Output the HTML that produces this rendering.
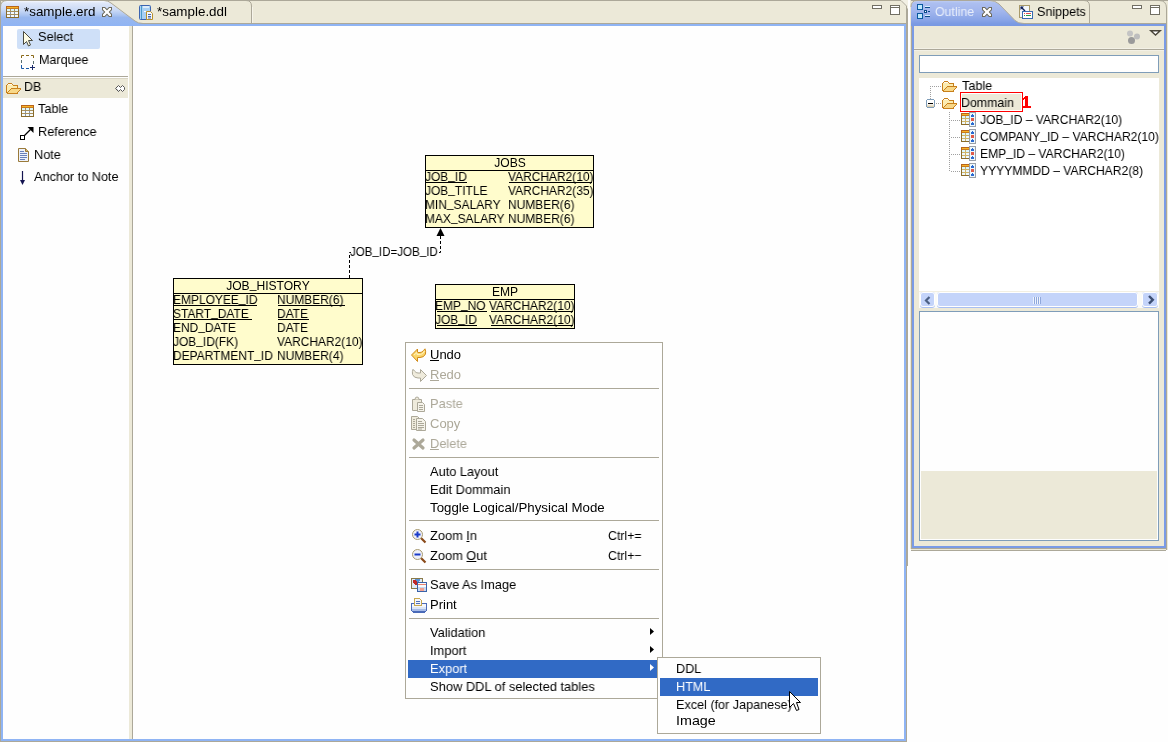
<!DOCTYPE html>
<html><head><meta charset="utf-8">
<style>
*{box-sizing:border-box;margin:0;padding:0}
html,body{width:1168px;height:742px;overflow:hidden;background:#fefefe}
body{position:relative;font-family:"Liberation Sans",sans-serif;font-size:13px;color:#000}
.a{position:absolute}
.t{position:absolute;white-space:pre;line-height:14px;transform-origin:0 0;will-change:transform}
.us{font-style:normal;position:relative;top:-2px}
svg{position:absolute;overflow:visible}
u{text-decoration:none;border-bottom:1px solid currentColor;display:inline-block;line-height:11px}
</style></head><body>
<div class="a" style="left:0px;top:0px;width:908px;height:742px;background:#aca899;"></div>
<div class="a" style="left:907px;top:566px;width:1px;height:176px;background:#fefefe;"></div>
<div class="a" style="left:1px;top:1px;width:905px;height:22px;background:#ece9d8;"></div>
<div class="a" style="left:1px;top:24px;width:905px;height:717px;background:#8fb4f4;"></div>
<div class="a" style="left:3px;top:26px;width:901px;height:713px;background:#fefefe;"></div>
<div class="a" style="left:140px;top:23px;width:766px;height:1px;background:#aca899;"></div>
<div class="a" style="left:129px;top:26px;width:3px;height:713px;background:#ece9d8;"></div>
<div class="a" style="left:132px;top:26px;width:1px;height:713px;background:#aca899;"></div>
<svg style="left:0px;top:0px" width="150" height="26" viewBox="0 0 150 26"><defs><linearGradient id="g1" x1="0" y1="0" x2="0" y2="1">
<stop offset="0" stop-color="#f5f7fd"/><stop offset="0.077" stop-color="#e0e8f9"/>
<stop offset="0.385" stop-color="#c8d8f5"/><stop offset="0.577" stop-color="#a9c3f0"/><stop offset="0.654" stop-color="#98b7ee"/>
<stop offset="1" stop-color="#8fb4f4"/></linearGradient></defs>
<path d="M1 26 L1 7 Q1 1 7 1 L104 1 Q108 1 111 3.5 L135 21 Q138 23.5 143 23.5 L150 23.5 L150 26 Z" fill="url(#g1)"/>
<path d="M0.5 26 L0.5 7 Q0.5 0.5 7 0.5 L104 0.5 Q108 0.5 111 3 L135 21 Q138 23.5 143 23.5 L150 23.5" fill="none" stroke="#aca899" stroke-width="1"/></svg>
<svg style="left:130px;top:0px" width="130" height="26" viewBox="0 0 130 26"><path d="M121.5 23 L121.5 6 Q121.5 0.5 116 0.5" fill="none" stroke="#aca899"/><path d="M122.5 23 V7" stroke="#f6f4ea"/></svg>
<svg style="left:6px;top:6px" width="13" height="12" shape-rendering="crispEdges"><rect x="0" y="0" width="13" height="1" fill="#b8641c"/><rect x="0" y="1" width="1" height="1" fill="#b8641c"/><rect x="1" y="1" width="11" height="1" fill="#f6b424"/><rect x="12" y="1" width="1" height="1" fill="#b8641c"/><rect x="0" y="2" width="1" height="1" fill="#b8641c"/><rect x="1" y="2" width="11" height="1" fill="#c87a20"/><rect x="12" y="2" width="1" height="1" fill="#b8641c"/><rect x="0" y="3" width="1" height="1" fill="#8a6c2c"/><rect x="1" y="3" width="3" height="1" fill="#dcf6fc"/><rect x="4" y="3" width="1" height="1" fill="#a89060"/><rect x="5" y="3" width="3" height="1" fill="#dcf6fc"/><rect x="8" y="3" width="1" height="1" fill="#a89060"/><rect x="9" y="3" width="3" height="1" fill="#dcf6fc"/><rect x="12" y="3" width="1" height="1" fill="#8a6c2c"/><rect x="0" y="4" width="1" height="1" fill="#8a6c2c"/><rect x="1" y="4" width="3" height="1" fill="#dcf6fc"/><rect x="4" y="4" width="1" height="1" fill="#a89060"/><rect x="5" y="4" width="3" height="1" fill="#dcf6fc"/><rect x="8" y="4" width="1" height="1" fill="#a89060"/><rect x="9" y="4" width="3" height="1" fill="#dcf6fc"/><rect x="12" y="4" width="1" height="1" fill="#8a6c2c"/><rect x="0" y="5" width="1" height="1" fill="#8a6c2c"/><rect x="1" y="5" width="11" height="1" fill="#a8905c"/><rect x="12" y="5" width="1" height="1" fill="#8a6c2c"/><rect x="0" y="6" width="1" height="1" fill="#8a6c2c"/><rect x="1" y="6" width="3" height="1" fill="#f6fbfc"/><rect x="4" y="6" width="1" height="1" fill="#8494a8"/><rect x="5" y="6" width="3" height="1" fill="#f6fbfc"/><rect x="8" y="6" width="1" height="1" fill="#8494a8"/><rect x="9" y="6" width="3" height="1" fill="#f6fbfc"/><rect x="12" y="6" width="1" height="1" fill="#8a6c2c"/><rect x="0" y="7" width="1" height="1" fill="#8a6c2c"/><rect x="1" y="7" width="3" height="1" fill="#f6fbfc"/><rect x="4" y="7" width="1" height="1" fill="#8494a8"/><rect x="5" y="7" width="3" height="1" fill="#f6fbfc"/><rect x="8" y="7" width="1" height="1" fill="#8494a8"/><rect x="9" y="7" width="3" height="1" fill="#f6fbfc"/><rect x="12" y="7" width="1" height="1" fill="#8a6c2c"/><rect x="0" y="8" width="1" height="1" fill="#8a6c2c"/><rect x="1" y="8" width="11" height="1" fill="#a8905c"/><rect x="12" y="8" width="1" height="1" fill="#8a6c2c"/><rect x="0" y="9" width="1" height="1" fill="#8a6c2c"/><rect x="1" y="9" width="3" height="1" fill="#f6fbfc"/><rect x="4" y="9" width="1" height="1" fill="#8494a8"/><rect x="5" y="9" width="3" height="1" fill="#f6fbfc"/><rect x="8" y="9" width="1" height="1" fill="#8494a8"/><rect x="9" y="9" width="3" height="1" fill="#f6fbfc"/><rect x="12" y="9" width="1" height="1" fill="#8a6c2c"/><rect x="0" y="10" width="1" height="1" fill="#8a6c2c"/><rect x="1" y="10" width="3" height="1" fill="#f6fbfc"/><rect x="4" y="10" width="1" height="1" fill="#8494a8"/><rect x="5" y="10" width="3" height="1" fill="#f6fbfc"/><rect x="8" y="10" width="1" height="1" fill="#8494a8"/><rect x="9" y="10" width="3" height="1" fill="#f6fbfc"/><rect x="12" y="10" width="1" height="1" fill="#8a6c2c"/><rect x="0" y="11" width="13" height="1" fill="#8a6c2c"/></svg>
<div class="t " style="left:24px;top:5px;font-size:13px;transform:scaleX(1.03);">*sample.erd</div>
<svg style="left:102px;top:7px" width="10" height="10" viewBox="0 0 10 10"><path d="M0 0 H3 L5 2 L7 0 H10 V3 L8 5 L10 7 V10 H7 L5 8 L3 10 H0 V7 L2 5 L0 3 Z" fill="#6d6a5c"/><path d="M1 1 H2.6 L5 3.4 L7.4 1 H9 V2.6 L6.6 5 L9 7.4 V9 H7.4 L5 6.6 L2.6 9 H1 V7.4 L3.4 5 L1 2.6 Z" fill="#fff"/></svg>
<svg style="left:139px;top:5px" width="15" height="16" viewBox="0 0 15 16"><rect x="0.5" y="0.5" width="11" height="14" rx="1" fill="#a8d0f4" stroke="#3c64b0"/>
<path d="M2.5 1 V14" stroke="#4a9ac8"/><path d="M4 2 H10" stroke="#fff" stroke-width="1.2"/><path d="M5 6.5 H9" stroke="#fff"/>
<path d="M7.5 6.5 H11.5 L13.5 8.5 V14.5 H7.5 Z" fill="#f4f8fd" stroke="#b8902a"/>
<path d="M9 9.5 H12 M9 11.5 H12 M9 13 H12" stroke="#4a6ab0"/></svg>
<div class="t " style="left:157px;top:5px;font-size:13px;transform:scaleX(1.03);">*sample.ddl</div>
<svg style="left:898px;top:0px" width="10" height="10" viewBox="0 0 10 10"><path d="M2 0 H10 V9 Z" fill="#f2f0e4"/><path d="M2 0.5 L3 0.5 L8.5 6 V9" fill="none" stroke="#aca899"/></svg>
<div class="a" style="left:872px;top:5px;width:10px;height:4px;background:#fff;border:1px solid #716f64"></div>
<div class="a" style="left:890px;top:5px;width:10px;height:10px;background:#fff;border:1px solid #716f64"></div>
<div class="a" style="left:891px;top:7px;width:8px;height:1px;background:#716f64;"></div>
<div class="a" style="left:17px;top:29px;width:83px;height:20px;background:#cfe0f8;border-radius:2px"></div>
<svg style="left:22px;top:30px" width="12" height="17" viewBox="0 0 12 17"><path d="M1.5 1.5 L1.5 14.5 L4.5 11.5 L6.5 16 L8.5 15 L6.5 10.5 L10.5 10.5 Z" fill="#fffde4" stroke="#4a4a40"/></svg>
<div class="t " style="left:38px;top:30px;font-size:13px;transform:scaleX(0.975);">Select</div>
<svg style="left:20px;top:54px" width="16" height="16" viewBox="0 0 16 16"><path d="M1.5 4 V1.5 H4 M6 1.5 H9 M11 1.5 H13.5 V4" fill="none" stroke="#8a6a1a"/>
<path d="M1.5 6 V9 M13.5 7 V10" stroke="#5a7070"/>
<path d="M1.5 11 V14.5 H4 M6 14.5 H9" fill="none" stroke="#1a5aa8"/>
<path d="M12.5 11 V16 M10 13.5 H15" stroke="#1a2a6a"/></svg>
<div class="t " style="left:39px;top:53px;font-size:13px;transform:scaleX(0.965);">Marquee</div>
<div class="a" style="left:3px;top:76px;width:125px;height:1px;background:#aca899;"></div>
<div class="a" style="left:3px;top:77px;width:125px;height:1px;background:#fefefe;"></div>
<div class="a" style="left:3px;top:78px;width:125px;height:1px;background:#d9d5c4;"></div>
<div class="a" style="left:3px;top:79px;width:125px;height:19px;background:#ece9d8;"></div>
<svg style="left:6px;top:83px" width="15" height="11" shape-rendering="crispEdges"><rect x="2" y="0" width="4" height="1" fill="#c8801c"/><rect x="1" y="1" width="1" height="1" fill="#c8801c"/><rect x="2" y="1" width="4" height="1" fill="#fffaf0"/><rect x="6" y="1" width="1" height="1" fill="#c8801c"/><rect x="0" y="2" width="1" height="1" fill="#c8801c"/><rect x="1" y="2" width="6" height="1" fill="#fcecb0"/><rect x="7" y="2" width="5" height="1" fill="#c8801c"/><rect x="0" y="3" width="1" height="1" fill="#c8801c"/><rect x="1" y="3" width="10" height="1" fill="#fcecb0"/><rect x="11" y="3" width="1" height="1" fill="#c8801c"/><rect x="0" y="4" width="1" height="1" fill="#c8801c"/><rect x="1" y="4" width="10" height="1" fill="#fcecb0"/><rect x="11" y="4" width="1" height="1" fill="#c8801c"/><rect x="0" y="5" width="1" height="1" fill="#c8801c"/><rect x="1" y="5" width="4" height="1" fill="#fcecb0"/><rect x="5" y="5" width="10" height="1" fill="#c8801c"/><rect x="0" y="6" width="1" height="1" fill="#c8801c"/><rect x="1" y="6" width="3" height="1" fill="#fcecb0"/><rect x="4" y="6" width="1" height="1" fill="#c8801c"/><rect x="5" y="6" width="9" height="1" fill="#f8d888"/><rect x="14" y="6" width="1" height="1" fill="#c8801c"/><rect x="0" y="7" width="1" height="1" fill="#c8801c"/><rect x="1" y="7" width="2" height="1" fill="#fcecb0"/><rect x="3" y="7" width="1" height="1" fill="#c8801c"/><rect x="4" y="7" width="9" height="1" fill="#f8d888"/><rect x="13" y="7" width="1" height="1" fill="#c8801c"/><rect x="0" y="8" width="1" height="1" fill="#c8801c"/><rect x="1" y="8" width="1" height="1" fill="#fcecb0"/><rect x="2" y="8" width="1" height="1" fill="#c8801c"/><rect x="3" y="8" width="9" height="1" fill="#f8d888"/><rect x="12" y="8" width="1" height="1" fill="#c8801c"/><rect x="0" y="9" width="2" height="1" fill="#c8801c"/><rect x="2" y="9" width="9" height="1" fill="#f8d888"/><rect x="11" y="9" width="1" height="1" fill="#c8801c"/><rect x="1" y="10" width="11" height="1" fill="#c8801c"/></svg>
<div class="t " style="left:24px;top:80px;font-size:13px;transform:scaleX(0.95);">DB</div>
<svg style="left:114px;top:84px" width="12" height="9" viewBox="0 0 12 9"><path d="M1.5 4.5 L4.5 1.5 L6.5 3.5 L8.5 1.5 L10.5 3.5 V5.5 L8.5 7.5 L6.5 5.5 L4.5 7.5 Z" fill="#fff" stroke="#555"/><path d="M2.2 5 L4.5 7.2" stroke="#555"/></svg>
<svg style="left:21px;top:105px" width="13" height="12" shape-rendering="crispEdges"><rect x="0" y="0" width="13" height="1" fill="#b8641c"/><rect x="0" y="1" width="1" height="1" fill="#b8641c"/><rect x="1" y="1" width="11" height="1" fill="#f6b424"/><rect x="12" y="1" width="1" height="1" fill="#b8641c"/><rect x="0" y="2" width="1" height="1" fill="#b8641c"/><rect x="1" y="2" width="11" height="1" fill="#c87a20"/><rect x="12" y="2" width="1" height="1" fill="#b8641c"/><rect x="0" y="3" width="1" height="1" fill="#8a6c2c"/><rect x="1" y="3" width="3" height="1" fill="#dcf6fc"/><rect x="4" y="3" width="1" height="1" fill="#a89060"/><rect x="5" y="3" width="3" height="1" fill="#dcf6fc"/><rect x="8" y="3" width="1" height="1" fill="#a89060"/><rect x="9" y="3" width="3" height="1" fill="#dcf6fc"/><rect x="12" y="3" width="1" height="1" fill="#8a6c2c"/><rect x="0" y="4" width="1" height="1" fill="#8a6c2c"/><rect x="1" y="4" width="3" height="1" fill="#dcf6fc"/><rect x="4" y="4" width="1" height="1" fill="#a89060"/><rect x="5" y="4" width="3" height="1" fill="#dcf6fc"/><rect x="8" y="4" width="1" height="1" fill="#a89060"/><rect x="9" y="4" width="3" height="1" fill="#dcf6fc"/><rect x="12" y="4" width="1" height="1" fill="#8a6c2c"/><rect x="0" y="5" width="1" height="1" fill="#8a6c2c"/><rect x="1" y="5" width="11" height="1" fill="#a8905c"/><rect x="12" y="5" width="1" height="1" fill="#8a6c2c"/><rect x="0" y="6" width="1" height="1" fill="#8a6c2c"/><rect x="1" y="6" width="3" height="1" fill="#f6fbfc"/><rect x="4" y="6" width="1" height="1" fill="#8494a8"/><rect x="5" y="6" width="3" height="1" fill="#f6fbfc"/><rect x="8" y="6" width="1" height="1" fill="#8494a8"/><rect x="9" y="6" width="3" height="1" fill="#f6fbfc"/><rect x="12" y="6" width="1" height="1" fill="#8a6c2c"/><rect x="0" y="7" width="1" height="1" fill="#8a6c2c"/><rect x="1" y="7" width="3" height="1" fill="#f6fbfc"/><rect x="4" y="7" width="1" height="1" fill="#8494a8"/><rect x="5" y="7" width="3" height="1" fill="#f6fbfc"/><rect x="8" y="7" width="1" height="1" fill="#8494a8"/><rect x="9" y="7" width="3" height="1" fill="#f6fbfc"/><rect x="12" y="7" width="1" height="1" fill="#8a6c2c"/><rect x="0" y="8" width="1" height="1" fill="#8a6c2c"/><rect x="1" y="8" width="11" height="1" fill="#a8905c"/><rect x="12" y="8" width="1" height="1" fill="#8a6c2c"/><rect x="0" y="9" width="1" height="1" fill="#8a6c2c"/><rect x="1" y="9" width="3" height="1" fill="#f6fbfc"/><rect x="4" y="9" width="1" height="1" fill="#8494a8"/><rect x="5" y="9" width="3" height="1" fill="#f6fbfc"/><rect x="8" y="9" width="1" height="1" fill="#8494a8"/><rect x="9" y="9" width="3" height="1" fill="#f6fbfc"/><rect x="12" y="9" width="1" height="1" fill="#8a6c2c"/><rect x="0" y="10" width="1" height="1" fill="#8a6c2c"/><rect x="1" y="10" width="3" height="1" fill="#f6fbfc"/><rect x="4" y="10" width="1" height="1" fill="#8494a8"/><rect x="5" y="10" width="3" height="1" fill="#f6fbfc"/><rect x="8" y="10" width="1" height="1" fill="#8494a8"/><rect x="9" y="10" width="3" height="1" fill="#f6fbfc"/><rect x="12" y="10" width="1" height="1" fill="#8a6c2c"/><rect x="0" y="11" width="13" height="1" fill="#8a6c2c"/></svg>
<div class="t " style="left:38px;top:102px;font-size:13px;transform:scaleX(0.975);">Table</div>
<svg style="left:19px;top:125px" width="15" height="16" viewBox="0 0 15 16"><rect x="1.5" y="10.5" width="4" height="4" fill="#fff" stroke="#000"/><path d="M5.5 10.5 L11.5 4.5" stroke="#000" stroke-width="1.2"/><path d="M8.5 2 H14.5 V8 Z" fill="#000"/></svg>
<div class="t " style="left:38px;top:125px;font-size:13px;transform:scaleX(0.975);">Reference</div>
<svg style="left:18px;top:148px" width="12" height="15" viewBox="0 0 12 15"><path d="M0.5 0.5 H7.5 L10.5 3.5 V13.5 H0.5 Z" fill="#eef2fb" stroke="#9a7a3a"/>
<path d="M7.5 0.5 V3.5 H10.5" fill="#d8b870" stroke="#9a7a3a"/>
<path d="M2 3.5 H6 M2 5.5 H9 M2 7.5 H9 M2 9.5 H9 M2 11.5 H7" stroke="#6a80b8"/></svg>
<div class="t " style="left:34px;top:148px;font-size:13px;transform:scaleX(0.975);">Note</div>
<svg style="left:19px;top:170px" width="8" height="16" viewBox="0 0 8 16"><path d="M3.5 1 V12" stroke="#141450" stroke-width="1.2"/><path d="M1 10 H6 L3.5 15 Z" fill="#141450"/></svg>
<div class="t " style="left:34px;top:170px;font-size:13px;transform:scaleX(0.975);">Anchor to Note</div>
<div class="a" style="left:425px;top:155px;width:169px;height:73px;background:#fffccc;border:1px solid #000"></div>
<div class="a" style="left:425px;top:170px;width:169px;height:1px;background:#000;"></div>
<div class="t" style="left:425px;top:156px;width:169px;text-align:center;font-size:13px"><span style="display:inline-block;transform:scaleX(0.93)">JOBS</span></div>
<div class="t " style="left:425px;top:170px;font-size:13px;transform:scaleX(0.92);">JOB<i class="us">_</i>ID</div>
<div class="t " style="left:508px;top:170px;font-size:13px;transform:scaleX(0.92);">VARCHAR2(10)</div>
<div class="t " style="left:425px;top:184px;font-size:13px;transform:scaleX(0.92);">JOB<i class="us">_</i>TITLE</div>
<div class="t " style="left:508px;top:184px;font-size:13px;transform:scaleX(0.92);">VARCHAR2(35)</div>
<div class="t " style="left:425px;top:198px;font-size:13px;transform:scaleX(0.92);">MIN<i class="us">_</i>SALARY</div>
<div class="t " style="left:508px;top:198px;font-size:13px;transform:scaleX(0.92);">NUMBER(6)</div>
<div class="t " style="left:425px;top:212px;font-size:13px;transform:scaleX(0.92);">MAX<i class="us">_</i>SALARY</div>
<div class="t " style="left:508px;top:212px;font-size:13px;transform:scaleX(0.92);">NUMBER(6)</div>
<div class="a" style="left:173px;top:278px;width:190px;height:87px;background:#fffccc;border:1px solid #000"></div>
<div class="a" style="left:173px;top:293px;width:190px;height:1px;background:#000;"></div>
<div class="t" style="left:173px;top:279px;width:190px;text-align:center;font-size:13px"><span style="display:inline-block;transform:scaleX(0.93)">JOB<i class="us">_</i>HISTORY</span></div>
<div class="t " style="left:173px;top:293px;font-size:13px;transform:scaleX(0.92);">EMPLOYEE<i class="us">_</i>ID</div>
<div class="t " style="left:277px;top:293px;font-size:13px;transform:scaleX(0.92);">NUMBER(6)</div>
<div class="t " style="left:173px;top:307px;font-size:13px;transform:scaleX(0.92);">START<i class="us">_</i>DATE</div>
<div class="t " style="left:277px;top:307px;font-size:13px;transform:scaleX(0.92);">DATE</div>
<div class="t " style="left:173px;top:321px;font-size:13px;transform:scaleX(0.92);">END<i class="us">_</i>DATE</div>
<div class="t " style="left:277px;top:321px;font-size:13px;transform:scaleX(0.92);">DATE</div>
<div class="t " style="left:173px;top:335px;font-size:13px;transform:scaleX(0.92);">JOB<i class="us">_</i>ID(FK)</div>
<div class="t " style="left:277px;top:335px;font-size:13px;transform:scaleX(0.92);">VARCHAR2(10)</div>
<div class="t " style="left:173px;top:349px;font-size:13px;transform:scaleX(0.92);">DEPARTMENT<i class="us">_</i>ID</div>
<div class="t " style="left:277px;top:349px;font-size:13px;transform:scaleX(0.92);">NUMBER(4)</div>
<div class="a" style="left:435px;top:284px;width:140px;height:45px;background:#fffccc;border:1px solid #000"></div>
<div class="a" style="left:435px;top:299px;width:140px;height:1px;background:#000;"></div>
<div class="t" style="left:435px;top:285px;width:140px;text-align:center;font-size:13px"><span style="display:inline-block;transform:scaleX(0.93)">EMP</span></div>
<div class="t " style="left:435px;top:299px;font-size:13px;transform:scaleX(0.92);">EMP<i class="us">_</i>NO</div>
<div class="t " style="left:489px;top:299px;font-size:13px;transform:scaleX(0.92);">VARCHAR2(10)</div>
<div class="t " style="left:435px;top:313px;font-size:13px;transform:scaleX(0.92);">JOB<i class="us">_</i>ID</div>
<div class="t " style="left:489px;top:313px;font-size:13px;transform:scaleX(0.92);">VARCHAR2(10)</div>
<div class="a" style="left:426px;top:182px;width:41px;height:1px;background:#000;"></div>
<div class="a" style="left:509px;top:182px;width:83px;height:1px;background:#000;"></div>
<div class="a" style="left:174px;top:305px;width:83px;height:1px;background:#000;"></div>
<div class="a" style="left:278px;top:305px;width:67px;height:1px;background:#000;"></div>
<div class="a" style="left:174px;top:319px;width:78px;height:1px;background:#000;"></div>
<div class="a" style="left:278px;top:319px;width:31px;height:1px;background:#000;"></div>
<div class="a" style="left:437px;top:311px;width:50px;height:1px;background:#000;"></div>
<div class="a" style="left:491px;top:311px;width:82px;height:1px;background:#000;"></div>
<div class="a" style="left:437px;top:325px;width:40px;height:1px;background:#000;"></div>
<div class="a" style="left:491px;top:325px;width:82px;height:1px;background:#000;"></div>
<svg style="left:0px;top:0px" width="907" height="742" viewBox="0 0 907 742"><path d="M349.5 278 V252.5 H440.5 V236" fill="none" stroke="#000" stroke-dasharray="3 2"/>
<path d="M436.5 236 L444.5 236 L440.5 228 Z" fill="#000"/></svg>
<div class="a" style="left:351px;top:244px;width:86px;height:14px;background:#fefefe;"></div>
<div class="t " style="left:350px;top:245px;font-size:13px;transform:scaleX(0.89);">JOB<i class="us">_</i>ID=JOB<i class="us">_</i>ID</div>
<div class="a" style="left:405px;top:342px;width:258px;height:357px;background:#fefefe;border:1px solid #aca899"></div>
<div class="t " style="left:430px;top:348px;font-size:13px;transform:scaleX(0.985);"><u>U</u>ndo</div>
<div class="t " style="left:430px;top:368px;font-size:13px;transform:scaleX(0.985);color:#aca899;"><u>R</u>edo</div>
<div class="a" style="left:409px;top:388px;width:250px;height:1px;background:#aca899;"></div>
<div class="t " style="left:430px;top:397px;font-size:13px;transform:scaleX(0.985);color:#aca899;">Paste</div>
<div class="t " style="left:430px;top:417px;font-size:13px;transform:scaleX(0.985);color:#aca899;">Copy</div>
<div class="t " style="left:430px;top:437px;font-size:13px;transform:scaleX(0.985);color:#aca899;"><u>D</u>elete</div>
<div class="a" style="left:409px;top:457px;width:250px;height:1px;background:#aca899;"></div>
<div class="t " style="left:430px;top:465px;font-size:13px;transform:scaleX(0.985);">Auto Layout</div>
<div class="t " style="left:430px;top:483px;font-size:13px;transform:scaleX(0.985);">Edit Dommain</div>
<div class="t " style="left:430px;top:501px;font-size:13px;transform:scaleX(1.02);">Toggle Logical/Physical Mode</div>
<div class="a" style="left:409px;top:520px;width:250px;height:1px;background:#aca899;"></div>
<div class="t " style="left:430px;top:529px;font-size:13px;transform:scaleX(0.985);">Zoom <u>I</u>n</div>
<div class="t " style="left:608px;top:529px;font-size:13px;transform:scaleX(0.95);">Ctrl+=</div>
<div class="t " style="left:430px;top:549px;font-size:13px;transform:scaleX(0.985);">Zoom <u>O</u>ut</div>
<div class="t " style="left:608px;top:549px;font-size:13px;transform:scaleX(0.95);">Ctrl+−</div>
<div class="a" style="left:409px;top:569px;width:250px;height:1px;background:#aca899;"></div>
<div class="t " style="left:430px;top:578px;font-size:13px;transform:scaleX(0.985);">Save As Image</div>
<div class="t " style="left:430px;top:598px;font-size:13px;transform:scaleX(0.985);">Print</div>
<div class="a" style="left:409px;top:618px;width:250px;height:1px;background:#aca899;"></div>
<div class="t " style="left:430px;top:626px;font-size:13px;transform:scaleX(0.985);">Validation</div>
<div class="t " style="left:430px;top:644px;font-size:13px;transform:scaleX(0.985);">Import</div>
<div class="a" style="left:408px;top:660px;width:249px;height:18px;background:#316ac5;"></div>
<div class="t " style="left:430px;top:662px;font-size:13px;transform:scaleX(0.985);color:#fff;">Export</div>
<div class="t " style="left:430px;top:680px;font-size:13px;transform:scaleX(0.99);">Show DDL of selected tables</div>
<svg style="left:0px;top:0px" width="907" height="742" viewBox="0 0 907 742"><path d="M650 628 L654 631.5 L650 635 Z" fill="#000"/>
<path d="M650 646 L654 649.5 L650 653 Z" fill="#000"/>
<path d="M650 664 L654 667.5 L650 671 Z" fill="#fff"/></svg>
<svg style="left:411px;top:348px" width="16" height="15" viewBox="0 0 16 15"><path d="M0.5 7 L6.5 1 V4.5 H9 Q11 4.5 12.5 2.5 L14 0.8 Q15 3 14.5 6 Q13 9.5 9 9.5 H6.5 V13.5 Z" fill="#fbd66a" stroke="#d08a1a"/>
<path d="M3 7 L6 4.5 V6.5 H9.5 Q12 6 13.5 3" fill="none" stroke="#fff2c0"/></svg>
<svg style="left:411px;top:368px" width="16" height="15" viewBox="0 0 16 15"><path d="M15.5 7.5 L9.5 1.5 V5 H7 Q5 5 3.5 3 L2 1.3 Q1 3.5 1.5 6.5 Q3 10 7 10 H9.5 V13.5 Z" fill="#efebdc" stroke="#aca899"/></svg>
<svg style="left:411px;top:396px" width="15" height="17" viewBox="0 0 15 17"><path d="M1.5 3.5 H10.5 V12.5 L8.5 14.5 H1.5 Z" fill="#efebdc" stroke="#aca899"/>
<path d="M4 3.5 Q4 1 6 1 Q8 1 8 3.5" fill="#efebdc" stroke="#aca899"/>
<path d="M6.5 6.5 H11.5 L13.5 8.5 V15.5 H6.5 Z" fill="#f5f3ea" stroke="#aca899"/>
<path d="M8 9.5 H12 M8 11.5 H12 M8 13.5 H12" stroke="#aca899"/></svg>
<svg style="left:411px;top:416px" width="16" height="16" viewBox="0 0 16 16"><path d="M0.5 0.5 H6.5 L8.5 2.5 V13.5 H0.5 Z" fill="#efebdc" stroke="#aca899"/>
<path d="M2 3.5 H4 M2 5.5 H4 M2 7.5 H4 M2 9.5 H4 M2 11.5 H4" stroke="#aca899"/>
<path d="M5.5 2.5 H11.5 L14.5 5.5 V14.5 H5.5 Z" fill="#f5f3ea" stroke="#aca899"/>
<path d="M7 5.5 H11 M7 7.5 H13 M7 9.5 H13 M7 11.5 H13 M7 13 H11" stroke="#aca899"/></svg>
<svg style="left:412px;top:438px" width="14" height="12" viewBox="0 0 14 12"><path d="M2 2 L11 10 M11 2 L2 10" stroke="#aca899" stroke-width="3.2" stroke-linecap="round"/></svg>
<svg style="left:412px;top:529px" width="16" height="16" viewBox="0 0 16 16"><circle cx="5.5" cy="5.5" r="5" fill="#eef0f8" stroke="#a89a70"/><path d="M9.2 9.2 L13.5 13.5" stroke="#8a4a1a" stroke-width="2.2"/><path d="M2.5 5.5 H8.5" stroke="#1a3ac8" stroke-width="2"/><path d="M5.5 2.5 V8.5" stroke="#1a3ac8" stroke-width="2"/></svg>
<svg style="left:412px;top:549px" width="16" height="16" viewBox="0 0 16 16"><circle cx="5.5" cy="5.5" r="5" fill="#eef0f8" stroke="#a89a70"/><path d="M9.2 9.2 L13.5 13.5" stroke="#8a4a1a" stroke-width="2.2"/><path d="M2.5 5.5 H8.5" stroke="#1a3ac8" stroke-width="2"/></svg>
<svg style="left:411px;top:578px" width="16" height="14" shape-rendering="crispEdges"><rect x="0" y="0" width="12" height="1" fill="#8a7a4a"/><rect x="0" y="1" width="1" height="1" fill="#8a7a4a"/><rect x="1" y="1" width="3" height="1" fill="#dfeaf6"/><rect x="4" y="1" width="5" height="1" fill="#5a92d4"/><rect x="9" y="1" width="2" height="1" fill="#dfeaf6"/><rect x="11" y="1" width="1" height="1" fill="#8a7a4a"/><rect x="0" y="2" width="1" height="1" fill="#8a7a4a"/><rect x="1" y="2" width="1" height="1" fill="#dfeaf6"/><rect x="2" y="2" width="3" height="1" fill="#c02828"/><rect x="5" y="2" width="4" height="1" fill="#5a92d4"/><rect x="9" y="2" width="2" height="1" fill="#dfeaf6"/><rect x="11" y="2" width="1" height="1" fill="#8a7a4a"/><rect x="0" y="3" width="1" height="1" fill="#8a7a4a"/><rect x="1" y="3" width="1" height="1" fill="#dfeaf6"/><rect x="2" y="3" width="4" height="1" fill="#c02828"/><rect x="6" y="3" width="2" height="1" fill="#5a92d4"/><rect x="8" y="3" width="3" height="1" fill="#dfeaf6"/><rect x="11" y="3" width="1" height="1" fill="#8a7a4a"/><rect x="0" y="4" width="1" height="1" fill="#8a7a4a"/><rect x="1" y="4" width="1" height="1" fill="#dfeaf6"/><rect x="2" y="4" width="4" height="1" fill="#c02828"/><rect x="6" y="4" width="10" height="1" fill="#3a62a8"/><rect x="0" y="5" width="1" height="1" fill="#8a7a4a"/><rect x="1" y="5" width="2" height="1" fill="#dfeaf6"/><rect x="3" y="5" width="3" height="1" fill="#c02828"/><rect x="6" y="5" width="1" height="1" fill="#3a62a8"/><rect x="7" y="5" width="8" height="1" fill="#f8fafd"/><rect x="15" y="5" width="1" height="1" fill="#3a62a8"/><rect x="0" y="6" width="1" height="1" fill="#8a7a4a"/><rect x="1" y="6" width="3" height="1" fill="#dfeaf6"/><rect x="4" y="6" width="2" height="1" fill="#c02828"/><rect x="6" y="6" width="1" height="1" fill="#3a62a8"/><rect x="7" y="6" width="8" height="1" fill="#e88070"/><rect x="15" y="6" width="1" height="1" fill="#3a62a8"/><rect x="0" y="7" width="1" height="1" fill="#8a7a4a"/><rect x="1" y="7" width="5" height="1" fill="#dfeaf6"/><rect x="6" y="7" width="1" height="1" fill="#3a62a8"/><rect x="7" y="7" width="8" height="1" fill="#f8fafd"/><rect x="15" y="7" width="1" height="1" fill="#3a62a8"/><rect x="0" y="8" width="1" height="1" fill="#8a7a4a"/><rect x="1" y="8" width="5" height="1" fill="#dfeaf6"/><rect x="6" y="8" width="1" height="1" fill="#3a62a8"/><rect x="7" y="8" width="8" height="1" fill="#f8fafd"/><rect x="15" y="8" width="1" height="1" fill="#3a62a8"/><rect x="0" y="9" width="1" height="1" fill="#8a7a4a"/><rect x="1" y="9" width="5" height="1" fill="#dfeaf6"/><rect x="6" y="9" width="1" height="1" fill="#3a62a8"/><rect x="7" y="9" width="8" height="1" fill="#c8d8f0"/><rect x="15" y="9" width="1" height="1" fill="#3a62a8"/><rect x="0" y="10" width="6" height="1" fill="#8a7a4a"/><rect x="6" y="10" width="1" height="1" fill="#3a62a8"/><rect x="7" y="10" width="2" height="1" fill="#c8d8f0"/><rect x="9" y="10" width="4" height="1" fill="#f0a090"/><rect x="13" y="10" width="2" height="1" fill="#c8d8f0"/><rect x="15" y="10" width="1" height="1" fill="#3a62a8"/><rect x="6" y="11" width="1" height="1" fill="#3a62a8"/><rect x="7" y="11" width="2" height="1" fill="#c8d8f0"/><rect x="9" y="11" width="4" height="1" fill="#f0a090"/><rect x="13" y="11" width="2" height="1" fill="#c8d8f0"/><rect x="15" y="11" width="1" height="1" fill="#3a62a8"/><rect x="6" y="12" width="1" height="1" fill="#3a62a8"/><rect x="7" y="12" width="2" height="1" fill="#c8d8f0"/><rect x="9" y="12" width="4" height="1" fill="#f0a090"/><rect x="13" y="12" width="2" height="1" fill="#c8d8f0"/><rect x="15" y="12" width="1" height="1" fill="#3a62a8"/><rect x="6" y="13" width="10" height="1" fill="#3a62a8"/></svg>
<svg style="left:411px;top:598px" width="16" height="15" shape-rendering="crispEdges"><rect x="3" y="0" width="6" height="1" fill="#c8a850"/><rect x="3" y="1" width="1" height="1" fill="#c8a850"/><rect x="4" y="1" width="5" height="1" fill="#f4f6fc"/><rect x="9" y="1" width="1" height="1" fill="#c8a850"/><rect x="3" y="2" width="1" height="1" fill="#c8a850"/><rect x="4" y="2" width="6" height="1" fill="#f4f6fc"/><rect x="10" y="2" width="1" height="1" fill="#c8a850"/><rect x="3" y="3" width="1" height="1" fill="#c8a850"/><rect x="4" y="3" width="1" height="1" fill="#f4f6fc"/><rect x="5" y="3" width="4" height="1" fill="#5070b8"/><rect x="9" y="3" width="1" height="1" fill="#f4f6fc"/><rect x="10" y="3" width="1" height="1" fill="#c8a850"/><rect x="3" y="4" width="1" height="1" fill="#c8a850"/><rect x="4" y="4" width="6" height="1" fill="#f4f6fc"/><rect x="10" y="4" width="1" height="1" fill="#c8a850"/><rect x="0" y="5" width="3" height="1" fill="#4a6ab8"/><rect x="3" y="5" width="1" height="1" fill="#c8a850"/><rect x="4" y="5" width="1" height="1" fill="#f4f6fc"/><rect x="5" y="5" width="4" height="1" fill="#5070b8"/><rect x="9" y="5" width="1" height="1" fill="#f4f6fc"/><rect x="10" y="5" width="1" height="1" fill="#c8a850"/><rect x="11" y="5" width="5" height="1" fill="#4a6ab8"/><rect x="0" y="6" width="1" height="1" fill="#4a6ab8"/><rect x="1" y="6" width="2" height="1" fill="#f4f6fc"/><rect x="3" y="6" width="1" height="1" fill="#c8a850"/><rect x="4" y="6" width="6" height="1" fill="#f4f6fc"/><rect x="10" y="6" width="1" height="1" fill="#c8a850"/><rect x="11" y="6" width="4" height="1" fill="#f4f6fc"/><rect x="15" y="6" width="1" height="1" fill="#4a6ab8"/><rect x="0" y="7" width="1" height="1" fill="#4a6ab8"/><rect x="1" y="7" width="2" height="1" fill="#f4f6fc"/><rect x="3" y="7" width="8" height="1" fill="#c8a850"/><rect x="11" y="7" width="4" height="1" fill="#f4f6fc"/><rect x="15" y="7" width="1" height="1" fill="#4a6ab8"/><rect x="0" y="8" width="1" height="1" fill="#4a6ab8"/><rect x="1" y="8" width="14" height="1" fill="#f4f6fc"/><rect x="15" y="8" width="1" height="1" fill="#4a6ab8"/><rect x="0" y="9" width="1" height="1" fill="#4a6ab8"/><rect x="1" y="9" width="14" height="1" fill="#dce6f6"/><rect x="15" y="9" width="1" height="1" fill="#4a6ab8"/><rect x="0" y="10" width="1" height="1" fill="#4a6ab8"/><rect x="1" y="10" width="14" height="1" fill="#dce6f6"/><rect x="15" y="10" width="1" height="1" fill="#4a6ab8"/><rect x="0" y="11" width="1" height="1" fill="#4a6ab8"/><rect x="1" y="11" width="14" height="1" fill="#a8bce8"/><rect x="15" y="11" width="1" height="1" fill="#4a6ab8"/><rect x="0" y="12" width="1" height="1" fill="#4a6ab8"/><rect x="1" y="12" width="14" height="1" fill="#a8bce8"/><rect x="15" y="12" width="1" height="1" fill="#4a6ab8"/><rect x="1" y="13" width="14" height="1" fill="#4a6ab8"/><rect x="2" y="14" width="12" height="1" fill="#4a6ab8"/></svg>
<div class="a" style="left:657px;top:657px;width:164px;height:77px;background:#fefefe;border:1px solid #aca899"></div>
<div class="t " style="left:676px;top:662px;font-size:13px;transform:scaleX(0.97);">DDL</div>
<div class="a" style="left:660px;top:678px;width:158px;height:18px;background:#316ac5;"></div>
<div class="t " style="left:676px;top:680px;font-size:13px;transform:scaleX(0.97);color:#fff;">HTML</div>
<div class="t " style="left:676px;top:698px;font-size:13px;transform:scaleX(0.97);">Excel (for Japanese)</div>
<div class="t " style="left:676px;top:714px;font-size:13px;transform:scaleX(1.1);">Image</div>
<svg style="left:0px;top:0px" width="907" height="742" viewBox="0 0 907 742"><path d="M789.5 691.5 V707.5 L793.5 703.5 L796.5 710.5 L799 709.5 L796.5 702.5 L800.5 702.5 Z" fill="#fff" stroke="#000"/></svg>
<div class="a" style="left:910px;top:0px;width:1px;height:549px;background:#ece9d8;"></div>
<div class="a" style="left:911px;top:0px;width:257px;height:549px;background:#aca899;"></div>
<div class="a" style="left:911px;top:1px;width:257px;height:22px;background:#ece9d8;"></div>
<div class="a" style="left:912px;top:24px;width:254px;height:524px;background:#7a9be6;"></div>
<div class="a" style="left:1016px;top:23px;width:150px;height:1px;background:#aca899;"></div>
<div class="a" style="left:914px;top:26px;width:250px;height:520px;background:#ece9d8;"></div>
<div class="a" style="left:911px;top:549px;width:255px;height:1px;background:#ece9d8;"></div>
<div class="a" style="left:911px;top:550px;width:255px;height:1px;background:#aca899;"></div>
<div class="a" style="left:1166px;top:23px;width:2px;height:527px;background:#aca899;"></div>
<div class="a" style="left:1167px;top:23px;width:1px;height:527px;background:#ece9d8;"></div>
<svg style="left:911px;top:0px" width="115" height="26" viewBox="0 0 115 26"><defs><linearGradient id="g2" x1="0" y1="0" x2="0" y2="1">
<stop offset="0" stop-color="#bccbf3"/><stop offset="0.08" stop-color="#adbff0"/>
<stop offset="0.4" stop-color="#a2b6ed"/><stop offset="0.75" stop-color="#8aa5e7"/><stop offset="0.9" stop-color="#7b9be3"/>
<stop offset="1" stop-color="#7898e2"/></linearGradient></defs>
<path d="M0 26 L0 7 Q0 1 6 1 L79 1 Q84 1 88 4 L104 20.5 Q107 23.5 113 23.5 L115 23.5 L115 26 Z" fill="url(#g2)"/>
<path d="M0 7 Q0 0.5 6 0.5 L79 0.5 Q84 0.5 88 4 L104 20.5 Q107 23.5 113 23.5 L115 23.5" fill="none" stroke="#aca899" stroke-width="1"/></svg>
<svg style="left:917px;top:4px" width="14" height="16" viewBox="0 0 14 16"><g shape-rendering="crispEdges"><rect x="0" y="0" width="6" height="6" fill="#0a5aa0"/><rect x="1" y="1" width="4" height="4" fill="#bfe8fb"/>
<rect x="0" y="9" width="6" height="6" fill="#0a5aa0"/><rect x="1" y="10" width="4" height="4" fill="#bfe8fb"/>
<rect x="8" y="3" width="5" height="1" fill="#0a4a88"/><rect x="8" y="2" width="5" height="1" fill="#d8f0fc"/>
<rect x="7" y="6" width="3" height="3" fill="#0a4a88"/><rect x="8" y="7" width="1" height="1" fill="#fff"/><rect x="11" y="7" width="2" height="1" fill="#0a4a88"/>
<rect x="8" y="12" width="5" height="1" fill="#0a4a88"/><rect x="8" y="11" width="5" height="1" fill="#d8f0fc"/></g></svg>
<div class="t " style="left:935px;top:5px;font-size:13px;transform:scaleX(0.95);color:#e8eefb;">Outline</div>
<svg style="left:982px;top:7px" width="10" height="10" viewBox="0 0 10 10"><path d="M0 0 H3 L5 2 L7 0 H10 V3 L8 5 L10 7 V10 H7 L5 8 L3 10 H0 V7 L2 5 L0 3 Z" fill="#6d6a5c"/><path d="M1 1 H2.6 L5 3.4 L7.4 1 H9 V2.6 L6.6 5 L9 7.4 V9 H7.4 L5 6.6 L2.6 9 H1 V7.4 L3.4 5 L1 2.6 Z" fill="#fff"/></svg>
<svg style="left:1010px;top:0px" width="158" height="24" viewBox="0 0 158 24"><path d="M79.5 23 L79.5 6 Q79.5 0.5 74 0.5" fill="none" stroke="#aca899"/><path d="M149 0.5 Q156.5 0.5 156.5 8 V23" fill="none" stroke="#aca899"/></svg>
<svg style="left:1019px;top:5px" width="14" height="14" viewBox="0 0 14 14"><rect x="0.5" y="0.5" width="10" height="12" fill="#f4f8fc" stroke="#a89a6a"/>
<path d="M2 2 L6 6" stroke="#10205a" stroke-width="1.4"/><path d="M1.5 1.5 H5 L1.5 5 Z" fill="#10205a"/>
<rect x="3.5" y="6.5" width="10" height="7" fill="#fff" stroke="#3a6ab0"/>
<path d="M5 8.5 H6 M7 8.5 H12" stroke="#e05050"/><path d="M5 10.5 H6 M7 10.5 H12" stroke="#2a9a4a"/></svg>
<div class="t " style="left:1037px;top:5px;font-size:13px;transform:scaleX(0.965);">Snippets</div>
<div class="a" style="left:1132px;top:5px;width:10px;height:4px;background:#fff;border:1px solid #716f64"></div>
<div class="a" style="left:1150px;top:5px;width:10px;height:10px;background:#fff;border:1px solid #716f64"></div>
<div class="a" style="left:1151px;top:7px;width:8px;height:1px;background:#716f64;"></div>
<div class="a" style="left:914px;top:48px;width:250px;height:1px;background:#f3f1e6;"></div>
<div class="a" style="left:914px;top:49px;width:250px;height:1px;background:#aca899;"></div>
<div class="a" style="left:914px;top:50px;width:250px;height:1px;background:#f3f1e6;"></div>
<svg style="left:1126px;top:30px" width="14" height="15" viewBox="0 0 14 15"><circle cx="4" cy="3.5" r="3" fill="#c4c4c4"/><circle cx="11" cy="6.5" r="3" fill="#bdbdbd"/><circle cx="5.5" cy="10.5" r="3.5" fill="#9a9a9a"/></svg>
<svg style="left:1150px;top:30px" width="11" height="6" viewBox="0 0 11 6"><path d="M0.8 0.8 H10.2 L5.5 5 Z" fill="#fff" stroke="#4a463a" stroke-width="1.4"/></svg>
<div class="a" style="left:919px;top:55px;width:240px;height:18px;background:#fff;border:1px solid #7f9db9"></div>
<div class="a" style="left:919px;top:78px;width:240px;height:213px;background:#fff;"></div>
<svg style="left:0px;top:0px" width="1168" height="742" viewBox="0 0 1168 742"><rect x="930" y="86" width="1" height="1" fill="#a0a0a0"/><rect x="932" y="86" width="1" height="1" fill="#a0a0a0"/><rect x="934" y="86" width="1" height="1" fill="#a0a0a0"/><rect x="936" y="86" width="1" height="1" fill="#a0a0a0"/><rect x="938" y="86" width="1" height="1" fill="#a0a0a0"/><rect x="940" y="86" width="1" height="1" fill="#a0a0a0"/><rect x="930" y="86" width="1" height="1" fill="#a0a0a0"/><rect x="930" y="88" width="1" height="1" fill="#a0a0a0"/><rect x="930" y="90" width="1" height="1" fill="#a0a0a0"/><rect x="930" y="92" width="1" height="1" fill="#a0a0a0"/><rect x="930" y="94" width="1" height="1" fill="#a0a0a0"/><rect x="930" y="96" width="1" height="1" fill="#a0a0a0"/><rect x="930" y="98" width="1" height="1" fill="#a0a0a0"/><rect x="936" y="103" width="1" height="1" fill="#a0a0a0"/><rect x="938" y="103" width="1" height="1" fill="#a0a0a0"/><rect x="940" y="103" width="1" height="1" fill="#a0a0a0"/><rect x="949" y="112" width="1" height="1" fill="#a0a0a0"/><rect x="949" y="114" width="1" height="1" fill="#a0a0a0"/><rect x="949" y="116" width="1" height="1" fill="#a0a0a0"/><rect x="949" y="118" width="1" height="1" fill="#a0a0a0"/><rect x="949" y="120" width="1" height="1" fill="#a0a0a0"/><rect x="949" y="122" width="1" height="1" fill="#a0a0a0"/><rect x="949" y="124" width="1" height="1" fill="#a0a0a0"/><rect x="949" y="126" width="1" height="1" fill="#a0a0a0"/><rect x="949" y="128" width="1" height="1" fill="#a0a0a0"/><rect x="949" y="130" width="1" height="1" fill="#a0a0a0"/><rect x="949" y="132" width="1" height="1" fill="#a0a0a0"/><rect x="949" y="134" width="1" height="1" fill="#a0a0a0"/><rect x="949" y="136" width="1" height="1" fill="#a0a0a0"/><rect x="949" y="138" width="1" height="1" fill="#a0a0a0"/><rect x="949" y="140" width="1" height="1" fill="#a0a0a0"/><rect x="949" y="142" width="1" height="1" fill="#a0a0a0"/><rect x="949" y="144" width="1" height="1" fill="#a0a0a0"/><rect x="949" y="146" width="1" height="1" fill="#a0a0a0"/><rect x="949" y="148" width="1" height="1" fill="#a0a0a0"/><rect x="949" y="150" width="1" height="1" fill="#a0a0a0"/><rect x="949" y="152" width="1" height="1" fill="#a0a0a0"/><rect x="949" y="154" width="1" height="1" fill="#a0a0a0"/><rect x="949" y="156" width="1" height="1" fill="#a0a0a0"/><rect x="949" y="158" width="1" height="1" fill="#a0a0a0"/><rect x="949" y="160" width="1" height="1" fill="#a0a0a0"/><rect x="949" y="162" width="1" height="1" fill="#a0a0a0"/><rect x="949" y="164" width="1" height="1" fill="#a0a0a0"/><rect x="949" y="166" width="1" height="1" fill="#a0a0a0"/><rect x="949" y="168" width="1" height="1" fill="#a0a0a0"/><rect x="949" y="170" width="1" height="1" fill="#a0a0a0"/><rect x="951" y="120" width="1" height="1" fill="#a0a0a0"/><rect x="953" y="120" width="1" height="1" fill="#a0a0a0"/><rect x="955" y="120" width="1" height="1" fill="#a0a0a0"/><rect x="957" y="120" width="1" height="1" fill="#a0a0a0"/><rect x="959" y="120" width="1" height="1" fill="#a0a0a0"/><rect x="951" y="137" width="1" height="1" fill="#a0a0a0"/><rect x="953" y="137" width="1" height="1" fill="#a0a0a0"/><rect x="955" y="137" width="1" height="1" fill="#a0a0a0"/><rect x="957" y="137" width="1" height="1" fill="#a0a0a0"/><rect x="959" y="137" width="1" height="1" fill="#a0a0a0"/><rect x="951" y="154" width="1" height="1" fill="#a0a0a0"/><rect x="953" y="154" width="1" height="1" fill="#a0a0a0"/><rect x="955" y="154" width="1" height="1" fill="#a0a0a0"/><rect x="957" y="154" width="1" height="1" fill="#a0a0a0"/><rect x="959" y="154" width="1" height="1" fill="#a0a0a0"/><rect x="951" y="171" width="1" height="1" fill="#a0a0a0"/><rect x="953" y="171" width="1" height="1" fill="#a0a0a0"/><rect x="955" y="171" width="1" height="1" fill="#a0a0a0"/><rect x="957" y="171" width="1" height="1" fill="#a0a0a0"/><rect x="959" y="171" width="1" height="1" fill="#a0a0a0"/></svg>
<svg style="left:942px;top:81px" width="15" height="11" shape-rendering="crispEdges"><rect x="2" y="0" width="4" height="1" fill="#c8801c"/><rect x="1" y="1" width="1" height="1" fill="#c8801c"/><rect x="2" y="1" width="4" height="1" fill="#fffaf0"/><rect x="6" y="1" width="1" height="1" fill="#c8801c"/><rect x="0" y="2" width="1" height="1" fill="#c8801c"/><rect x="1" y="2" width="6" height="1" fill="#fcecb0"/><rect x="7" y="2" width="5" height="1" fill="#c8801c"/><rect x="0" y="3" width="1" height="1" fill="#c8801c"/><rect x="1" y="3" width="10" height="1" fill="#fcecb0"/><rect x="11" y="3" width="1" height="1" fill="#c8801c"/><rect x="0" y="4" width="1" height="1" fill="#c8801c"/><rect x="1" y="4" width="10" height="1" fill="#fcecb0"/><rect x="11" y="4" width="1" height="1" fill="#c8801c"/><rect x="0" y="5" width="1" height="1" fill="#c8801c"/><rect x="1" y="5" width="4" height="1" fill="#fcecb0"/><rect x="5" y="5" width="10" height="1" fill="#c8801c"/><rect x="0" y="6" width="1" height="1" fill="#c8801c"/><rect x="1" y="6" width="3" height="1" fill="#fcecb0"/><rect x="4" y="6" width="1" height="1" fill="#c8801c"/><rect x="5" y="6" width="9" height="1" fill="#f8d888"/><rect x="14" y="6" width="1" height="1" fill="#c8801c"/><rect x="0" y="7" width="1" height="1" fill="#c8801c"/><rect x="1" y="7" width="2" height="1" fill="#fcecb0"/><rect x="3" y="7" width="1" height="1" fill="#c8801c"/><rect x="4" y="7" width="9" height="1" fill="#f8d888"/><rect x="13" y="7" width="1" height="1" fill="#c8801c"/><rect x="0" y="8" width="1" height="1" fill="#c8801c"/><rect x="1" y="8" width="1" height="1" fill="#fcecb0"/><rect x="2" y="8" width="1" height="1" fill="#c8801c"/><rect x="3" y="8" width="9" height="1" fill="#f8d888"/><rect x="12" y="8" width="1" height="1" fill="#c8801c"/><rect x="0" y="9" width="2" height="1" fill="#c8801c"/><rect x="2" y="9" width="9" height="1" fill="#f8d888"/><rect x="11" y="9" width="1" height="1" fill="#c8801c"/><rect x="1" y="10" width="11" height="1" fill="#c8801c"/></svg>
<svg style="left:942px;top:98px" width="15" height="11" shape-rendering="crispEdges"><rect x="2" y="0" width="4" height="1" fill="#c8801c"/><rect x="1" y="1" width="1" height="1" fill="#c8801c"/><rect x="2" y="1" width="4" height="1" fill="#fffaf0"/><rect x="6" y="1" width="1" height="1" fill="#c8801c"/><rect x="0" y="2" width="1" height="1" fill="#c8801c"/><rect x="1" y="2" width="6" height="1" fill="#fcecb0"/><rect x="7" y="2" width="5" height="1" fill="#c8801c"/><rect x="0" y="3" width="1" height="1" fill="#c8801c"/><rect x="1" y="3" width="10" height="1" fill="#fcecb0"/><rect x="11" y="3" width="1" height="1" fill="#c8801c"/><rect x="0" y="4" width="1" height="1" fill="#c8801c"/><rect x="1" y="4" width="10" height="1" fill="#fcecb0"/><rect x="11" y="4" width="1" height="1" fill="#c8801c"/><rect x="0" y="5" width="1" height="1" fill="#c8801c"/><rect x="1" y="5" width="4" height="1" fill="#fcecb0"/><rect x="5" y="5" width="10" height="1" fill="#c8801c"/><rect x="0" y="6" width="1" height="1" fill="#c8801c"/><rect x="1" y="6" width="3" height="1" fill="#fcecb0"/><rect x="4" y="6" width="1" height="1" fill="#c8801c"/><rect x="5" y="6" width="9" height="1" fill="#f8d888"/><rect x="14" y="6" width="1" height="1" fill="#c8801c"/><rect x="0" y="7" width="1" height="1" fill="#c8801c"/><rect x="1" y="7" width="2" height="1" fill="#fcecb0"/><rect x="3" y="7" width="1" height="1" fill="#c8801c"/><rect x="4" y="7" width="9" height="1" fill="#f8d888"/><rect x="13" y="7" width="1" height="1" fill="#c8801c"/><rect x="0" y="8" width="1" height="1" fill="#c8801c"/><rect x="1" y="8" width="1" height="1" fill="#fcecb0"/><rect x="2" y="8" width="1" height="1" fill="#c8801c"/><rect x="3" y="8" width="9" height="1" fill="#f8d888"/><rect x="12" y="8" width="1" height="1" fill="#c8801c"/><rect x="0" y="9" width="2" height="1" fill="#c8801c"/><rect x="2" y="9" width="9" height="1" fill="#f8d888"/><rect x="11" y="9" width="1" height="1" fill="#c8801c"/><rect x="1" y="10" width="11" height="1" fill="#c8801c"/></svg>
<div class="t " style="left:962px;top:79px;font-size:13px;transform:scaleX(0.975);">Table</div>
<svg style="left:926px;top:99px" width="9" height="9" shape-rendering="crispEdges"><rect x="1" y="0" width="7" height="1" fill="#7f9db9"/><rect x="0" y="1" width="1" height="1" fill="#7f9db9"/><rect x="1" y="1" width="7" height="1" fill="#ffffff"/><rect x="8" y="1" width="1" height="1" fill="#7f9db9"/><rect x="0" y="2" width="1" height="1" fill="#7f9db9"/><rect x="1" y="2" width="7" height="1" fill="#ffffff"/><rect x="8" y="2" width="1" height="1" fill="#7f9db9"/><rect x="0" y="3" width="1" height="1" fill="#7f9db9"/><rect x="1" y="3" width="7" height="1" fill="#ffffff"/><rect x="8" y="3" width="1" height="1" fill="#7f9db9"/><rect x="0" y="4" width="1" height="1" fill="#7f9db9"/><rect x="1" y="4" width="1" height="1" fill="#ffffff"/><rect x="2" y="4" width="5" height="1" fill="#000000"/><rect x="7" y="4" width="1" height="1" fill="#ffffff"/><rect x="8" y="4" width="1" height="1" fill="#7f9db9"/><rect x="0" y="5" width="1" height="1" fill="#7f9db9"/><rect x="1" y="5" width="7" height="1" fill="#f4f0e6"/><rect x="8" y="5" width="1" height="1" fill="#7f9db9"/><rect x="0" y="6" width="1" height="1" fill="#7f9db9"/><rect x="1" y="6" width="7" height="1" fill="#e8e0cc"/><rect x="8" y="6" width="1" height="1" fill="#7f9db9"/><rect x="0" y="7" width="1" height="1" fill="#7f9db9"/><rect x="1" y="7" width="7" height="1" fill="#d8ccb0"/><rect x="8" y="7" width="1" height="1" fill="#7f9db9"/><rect x="1" y="8" width="7" height="1" fill="#7f9db9"/></svg>
<div class="a" style="left:960px;top:92px;width:63px;height:20px;background:transparent;border:1px solid #f00"></div>
<div class="a" style="left:962px;top:94px;width:59px;height:16px;background:#ece9d8;"></div>
<div class="t " style="left:961px;top:96px;font-size:13px;transform:scaleX(0.95);">Dommain</div>
<svg style="left:1023px;top:96px" width="8" height="12" shape-rendering="crispEdges"><rect x="2" y="0" width="3" height="1" fill="#ff0000"/><rect x="1" y="1" width="4" height="1" fill="#ff0000"/><rect x="0" y="2" width="5" height="1" fill="#ff0000"/><rect x="0" y="3" width="1" height="1" fill="#ff0000"/><rect x="2" y="3" width="3" height="1" fill="#ff0000"/><rect x="2" y="4" width="3" height="1" fill="#ff0000"/><rect x="2" y="5" width="3" height="1" fill="#ff0000"/><rect x="2" y="6" width="3" height="1" fill="#ff0000"/><rect x="2" y="7" width="3" height="1" fill="#ff0000"/><rect x="2" y="8" width="3" height="1" fill="#ff0000"/><rect x="2" y="9" width="3" height="1" fill="#ff0000"/><rect x="0" y="10" width="8" height="1" fill="#ff0000"/><rect x="0" y="11" width="8" height="1" fill="#ff0000"/></svg>
<svg style="left:961px;top:112px" width="15" height="15" shape-rendering="crispEdges"><rect x="8" y="0" width="7" height="1" fill="#9aa0a8"/><rect x="0" y="1" width="8" height="1" fill="#b8641c"/><rect x="8" y="1" width="1" height="1" fill="#9aa0a8"/><rect x="9" y="1" width="5" height="1" fill="#eef8fc"/><rect x="14" y="1" width="1" height="1" fill="#9aa0a8"/><rect x="0" y="2" width="1" height="1" fill="#b8641c"/><rect x="1" y="2" width="7" height="1" fill="#f6b424"/><rect x="8" y="2" width="1" height="1" fill="#9aa0a8"/><rect x="9" y="2" width="2" height="1" fill="#eef8fc"/><rect x="11" y="2" width="1" height="1" fill="#2a6ad0"/><rect x="12" y="2" width="2" height="1" fill="#eef8fc"/><rect x="14" y="2" width="1" height="1" fill="#9aa0a8"/><rect x="0" y="3" width="1" height="1" fill="#b8641c"/><rect x="1" y="3" width="7" height="1" fill="#c87a20"/><rect x="8" y="3" width="1" height="1" fill="#9aa0a8"/><rect x="9" y="3" width="1" height="1" fill="#eef8fc"/><rect x="10" y="3" width="3" height="1" fill="#2a6ad0"/><rect x="13" y="3" width="1" height="1" fill="#eef8fc"/><rect x="14" y="3" width="1" height="1" fill="#9aa0a8"/><rect x="0" y="4" width="1" height="1" fill="#8a6c2c"/><rect x="1" y="4" width="3" height="1" fill="#dcf6fc"/><rect x="4" y="4" width="1" height="1" fill="#d0b468"/><rect x="5" y="4" width="3" height="1" fill="#dcf6fc"/><rect x="8" y="4" width="1" height="1" fill="#9aa0a8"/><rect x="9" y="4" width="1" height="1" fill="#eef8fc"/><rect x="10" y="4" width="3" height="1" fill="#2a6ad0"/><rect x="13" y="4" width="1" height="1" fill="#eef8fc"/><rect x="14" y="4" width="1" height="1" fill="#9aa0a8"/><rect x="0" y="5" width="1" height="1" fill="#8a6c2c"/><rect x="1" y="5" width="3" height="1" fill="#dcf6fc"/><rect x="4" y="5" width="1" height="1" fill="#d0b468"/><rect x="5" y="5" width="3" height="1" fill="#dcf6fc"/><rect x="8" y="5" width="1" height="1" fill="#9aa0a8"/><rect x="9" y="5" width="5" height="1" fill="#eef8fc"/><rect x="14" y="5" width="1" height="1" fill="#9aa0a8"/><rect x="0" y="6" width="1" height="1" fill="#8a6c2c"/><rect x="1" y="6" width="7" height="1" fill="#d0b468"/><rect x="8" y="6" width="1" height="1" fill="#9aa0a8"/><rect x="9" y="6" width="1" height="1" fill="#eef8fc"/><rect x="10" y="6" width="3" height="1" fill="#e05a4a"/><rect x="13" y="6" width="1" height="1" fill="#eef8fc"/><rect x="14" y="6" width="1" height="1" fill="#9aa0a8"/><rect x="0" y="7" width="1" height="1" fill="#8a6c2c"/><rect x="1" y="7" width="3" height="1" fill="#eef8fc"/><rect x="4" y="7" width="1" height="1" fill="#d0b468"/><rect x="5" y="7" width="3" height="1" fill="#eef8fc"/><rect x="8" y="7" width="1" height="1" fill="#9aa0a8"/><rect x="9" y="7" width="1" height="1" fill="#eef8fc"/><rect x="10" y="7" width="3" height="1" fill="#e05a4a"/><rect x="13" y="7" width="1" height="1" fill="#eef8fc"/><rect x="14" y="7" width="1" height="1" fill="#9aa0a8"/><rect x="0" y="8" width="1" height="1" fill="#8a6c2c"/><rect x="1" y="8" width="3" height="1" fill="#eef8fc"/><rect x="4" y="8" width="1" height="1" fill="#d0b468"/><rect x="5" y="8" width="3" height="1" fill="#eef8fc"/><rect x="8" y="8" width="1" height="1" fill="#9aa0a8"/><rect x="9" y="8" width="1" height="1" fill="#eef8fc"/><rect x="10" y="8" width="3" height="1" fill="#e05a4a"/><rect x="13" y="8" width="1" height="1" fill="#eef8fc"/><rect x="14" y="8" width="1" height="1" fill="#9aa0a8"/><rect x="0" y="9" width="1" height="1" fill="#8a6c2c"/><rect x="1" y="9" width="7" height="1" fill="#d0b468"/><rect x="8" y="9" width="1" height="1" fill="#9aa0a8"/><rect x="9" y="9" width="5" height="1" fill="#eef8fc"/><rect x="14" y="9" width="1" height="1" fill="#9aa0a8"/><rect x="0" y="10" width="1" height="1" fill="#8a6c2c"/><rect x="1" y="10" width="3" height="1" fill="#eef8fc"/><rect x="4" y="10" width="1" height="1" fill="#d0b468"/><rect x="5" y="10" width="3" height="1" fill="#eef8fc"/><rect x="8" y="10" width="1" height="1" fill="#9aa0a8"/><rect x="9" y="10" width="2" height="1" fill="#eef8fc"/><rect x="11" y="10" width="1" height="1" fill="#2a6ad0"/><rect x="12" y="10" width="2" height="1" fill="#eef8fc"/><rect x="14" y="10" width="1" height="1" fill="#9aa0a8"/><rect x="0" y="11" width="1" height="1" fill="#8a6c2c"/><rect x="1" y="11" width="3" height="1" fill="#eef8fc"/><rect x="4" y="11" width="1" height="1" fill="#d0b468"/><rect x="5" y="11" width="3" height="1" fill="#eef8fc"/><rect x="8" y="11" width="1" height="1" fill="#9aa0a8"/><rect x="9" y="11" width="1" height="1" fill="#eef8fc"/><rect x="10" y="11" width="3" height="1" fill="#2a6ad0"/><rect x="13" y="11" width="1" height="1" fill="#eef8fc"/><rect x="14" y="11" width="1" height="1" fill="#9aa0a8"/><rect x="0" y="12" width="8" height="1" fill="#8a6c2c"/><rect x="8" y="12" width="1" height="1" fill="#9aa0a8"/><rect x="9" y="12" width="1" height="1" fill="#eef8fc"/><rect x="10" y="12" width="3" height="1" fill="#2a6ad0"/><rect x="13" y="12" width="1" height="1" fill="#eef8fc"/><rect x="14" y="12" width="1" height="1" fill="#9aa0a8"/><rect x="8" y="13" width="1" height="1" fill="#9aa0a8"/><rect x="9" y="13" width="5" height="1" fill="#eef8fc"/><rect x="14" y="13" width="1" height="1" fill="#9aa0a8"/><rect x="8" y="14" width="7" height="1" fill="#9aa0a8"/></svg>
<div class="t " style="left:980px;top:113px;font-size:13px;transform:scaleX(0.93);">JOB<i class="us">_</i>ID – VARCHAR2(10)</div>
<svg style="left:961px;top:129px" width="15" height="15" shape-rendering="crispEdges"><rect x="8" y="0" width="7" height="1" fill="#9aa0a8"/><rect x="0" y="1" width="8" height="1" fill="#b8641c"/><rect x="8" y="1" width="1" height="1" fill="#9aa0a8"/><rect x="9" y="1" width="5" height="1" fill="#eef8fc"/><rect x="14" y="1" width="1" height="1" fill="#9aa0a8"/><rect x="0" y="2" width="1" height="1" fill="#b8641c"/><rect x="1" y="2" width="7" height="1" fill="#f6b424"/><rect x="8" y="2" width="1" height="1" fill="#9aa0a8"/><rect x="9" y="2" width="2" height="1" fill="#eef8fc"/><rect x="11" y="2" width="1" height="1" fill="#2a6ad0"/><rect x="12" y="2" width="2" height="1" fill="#eef8fc"/><rect x="14" y="2" width="1" height="1" fill="#9aa0a8"/><rect x="0" y="3" width="1" height="1" fill="#b8641c"/><rect x="1" y="3" width="7" height="1" fill="#c87a20"/><rect x="8" y="3" width="1" height="1" fill="#9aa0a8"/><rect x="9" y="3" width="1" height="1" fill="#eef8fc"/><rect x="10" y="3" width="3" height="1" fill="#2a6ad0"/><rect x="13" y="3" width="1" height="1" fill="#eef8fc"/><rect x="14" y="3" width="1" height="1" fill="#9aa0a8"/><rect x="0" y="4" width="1" height="1" fill="#8a6c2c"/><rect x="1" y="4" width="3" height="1" fill="#dcf6fc"/><rect x="4" y="4" width="1" height="1" fill="#d0b468"/><rect x="5" y="4" width="3" height="1" fill="#dcf6fc"/><rect x="8" y="4" width="1" height="1" fill="#9aa0a8"/><rect x="9" y="4" width="1" height="1" fill="#eef8fc"/><rect x="10" y="4" width="3" height="1" fill="#2a6ad0"/><rect x="13" y="4" width="1" height="1" fill="#eef8fc"/><rect x="14" y="4" width="1" height="1" fill="#9aa0a8"/><rect x="0" y="5" width="1" height="1" fill="#8a6c2c"/><rect x="1" y="5" width="3" height="1" fill="#dcf6fc"/><rect x="4" y="5" width="1" height="1" fill="#d0b468"/><rect x="5" y="5" width="3" height="1" fill="#dcf6fc"/><rect x="8" y="5" width="1" height="1" fill="#9aa0a8"/><rect x="9" y="5" width="5" height="1" fill="#eef8fc"/><rect x="14" y="5" width="1" height="1" fill="#9aa0a8"/><rect x="0" y="6" width="1" height="1" fill="#8a6c2c"/><rect x="1" y="6" width="7" height="1" fill="#d0b468"/><rect x="8" y="6" width="1" height="1" fill="#9aa0a8"/><rect x="9" y="6" width="1" height="1" fill="#eef8fc"/><rect x="10" y="6" width="3" height="1" fill="#e05a4a"/><rect x="13" y="6" width="1" height="1" fill="#eef8fc"/><rect x="14" y="6" width="1" height="1" fill="#9aa0a8"/><rect x="0" y="7" width="1" height="1" fill="#8a6c2c"/><rect x="1" y="7" width="3" height="1" fill="#eef8fc"/><rect x="4" y="7" width="1" height="1" fill="#d0b468"/><rect x="5" y="7" width="3" height="1" fill="#eef8fc"/><rect x="8" y="7" width="1" height="1" fill="#9aa0a8"/><rect x="9" y="7" width="1" height="1" fill="#eef8fc"/><rect x="10" y="7" width="3" height="1" fill="#e05a4a"/><rect x="13" y="7" width="1" height="1" fill="#eef8fc"/><rect x="14" y="7" width="1" height="1" fill="#9aa0a8"/><rect x="0" y="8" width="1" height="1" fill="#8a6c2c"/><rect x="1" y="8" width="3" height="1" fill="#eef8fc"/><rect x="4" y="8" width="1" height="1" fill="#d0b468"/><rect x="5" y="8" width="3" height="1" fill="#eef8fc"/><rect x="8" y="8" width="1" height="1" fill="#9aa0a8"/><rect x="9" y="8" width="1" height="1" fill="#eef8fc"/><rect x="10" y="8" width="3" height="1" fill="#e05a4a"/><rect x="13" y="8" width="1" height="1" fill="#eef8fc"/><rect x="14" y="8" width="1" height="1" fill="#9aa0a8"/><rect x="0" y="9" width="1" height="1" fill="#8a6c2c"/><rect x="1" y="9" width="7" height="1" fill="#d0b468"/><rect x="8" y="9" width="1" height="1" fill="#9aa0a8"/><rect x="9" y="9" width="5" height="1" fill="#eef8fc"/><rect x="14" y="9" width="1" height="1" fill="#9aa0a8"/><rect x="0" y="10" width="1" height="1" fill="#8a6c2c"/><rect x="1" y="10" width="3" height="1" fill="#eef8fc"/><rect x="4" y="10" width="1" height="1" fill="#d0b468"/><rect x="5" y="10" width="3" height="1" fill="#eef8fc"/><rect x="8" y="10" width="1" height="1" fill="#9aa0a8"/><rect x="9" y="10" width="2" height="1" fill="#eef8fc"/><rect x="11" y="10" width="1" height="1" fill="#2a6ad0"/><rect x="12" y="10" width="2" height="1" fill="#eef8fc"/><rect x="14" y="10" width="1" height="1" fill="#9aa0a8"/><rect x="0" y="11" width="1" height="1" fill="#8a6c2c"/><rect x="1" y="11" width="3" height="1" fill="#eef8fc"/><rect x="4" y="11" width="1" height="1" fill="#d0b468"/><rect x="5" y="11" width="3" height="1" fill="#eef8fc"/><rect x="8" y="11" width="1" height="1" fill="#9aa0a8"/><rect x="9" y="11" width="1" height="1" fill="#eef8fc"/><rect x="10" y="11" width="3" height="1" fill="#2a6ad0"/><rect x="13" y="11" width="1" height="1" fill="#eef8fc"/><rect x="14" y="11" width="1" height="1" fill="#9aa0a8"/><rect x="0" y="12" width="8" height="1" fill="#8a6c2c"/><rect x="8" y="12" width="1" height="1" fill="#9aa0a8"/><rect x="9" y="12" width="1" height="1" fill="#eef8fc"/><rect x="10" y="12" width="3" height="1" fill="#2a6ad0"/><rect x="13" y="12" width="1" height="1" fill="#eef8fc"/><rect x="14" y="12" width="1" height="1" fill="#9aa0a8"/><rect x="8" y="13" width="1" height="1" fill="#9aa0a8"/><rect x="9" y="13" width="5" height="1" fill="#eef8fc"/><rect x="14" y="13" width="1" height="1" fill="#9aa0a8"/><rect x="8" y="14" width="7" height="1" fill="#9aa0a8"/></svg>
<div class="t " style="left:980px;top:130px;font-size:13px;transform:scaleX(0.93);">COMPANY<i class="us">_</i>ID – VARCHAR2(10)</div>
<svg style="left:961px;top:146px" width="15" height="15" shape-rendering="crispEdges"><rect x="8" y="0" width="7" height="1" fill="#9aa0a8"/><rect x="0" y="1" width="8" height="1" fill="#b8641c"/><rect x="8" y="1" width="1" height="1" fill="#9aa0a8"/><rect x="9" y="1" width="5" height="1" fill="#eef8fc"/><rect x="14" y="1" width="1" height="1" fill="#9aa0a8"/><rect x="0" y="2" width="1" height="1" fill="#b8641c"/><rect x="1" y="2" width="7" height="1" fill="#f6b424"/><rect x="8" y="2" width="1" height="1" fill="#9aa0a8"/><rect x="9" y="2" width="2" height="1" fill="#eef8fc"/><rect x="11" y="2" width="1" height="1" fill="#2a6ad0"/><rect x="12" y="2" width="2" height="1" fill="#eef8fc"/><rect x="14" y="2" width="1" height="1" fill="#9aa0a8"/><rect x="0" y="3" width="1" height="1" fill="#b8641c"/><rect x="1" y="3" width="7" height="1" fill="#c87a20"/><rect x="8" y="3" width="1" height="1" fill="#9aa0a8"/><rect x="9" y="3" width="1" height="1" fill="#eef8fc"/><rect x="10" y="3" width="3" height="1" fill="#2a6ad0"/><rect x="13" y="3" width="1" height="1" fill="#eef8fc"/><rect x="14" y="3" width="1" height="1" fill="#9aa0a8"/><rect x="0" y="4" width="1" height="1" fill="#8a6c2c"/><rect x="1" y="4" width="3" height="1" fill="#dcf6fc"/><rect x="4" y="4" width="1" height="1" fill="#d0b468"/><rect x="5" y="4" width="3" height="1" fill="#dcf6fc"/><rect x="8" y="4" width="1" height="1" fill="#9aa0a8"/><rect x="9" y="4" width="1" height="1" fill="#eef8fc"/><rect x="10" y="4" width="3" height="1" fill="#2a6ad0"/><rect x="13" y="4" width="1" height="1" fill="#eef8fc"/><rect x="14" y="4" width="1" height="1" fill="#9aa0a8"/><rect x="0" y="5" width="1" height="1" fill="#8a6c2c"/><rect x="1" y="5" width="3" height="1" fill="#dcf6fc"/><rect x="4" y="5" width="1" height="1" fill="#d0b468"/><rect x="5" y="5" width="3" height="1" fill="#dcf6fc"/><rect x="8" y="5" width="1" height="1" fill="#9aa0a8"/><rect x="9" y="5" width="5" height="1" fill="#eef8fc"/><rect x="14" y="5" width="1" height="1" fill="#9aa0a8"/><rect x="0" y="6" width="1" height="1" fill="#8a6c2c"/><rect x="1" y="6" width="7" height="1" fill="#d0b468"/><rect x="8" y="6" width="1" height="1" fill="#9aa0a8"/><rect x="9" y="6" width="1" height="1" fill="#eef8fc"/><rect x="10" y="6" width="3" height="1" fill="#e05a4a"/><rect x="13" y="6" width="1" height="1" fill="#eef8fc"/><rect x="14" y="6" width="1" height="1" fill="#9aa0a8"/><rect x="0" y="7" width="1" height="1" fill="#8a6c2c"/><rect x="1" y="7" width="3" height="1" fill="#eef8fc"/><rect x="4" y="7" width="1" height="1" fill="#d0b468"/><rect x="5" y="7" width="3" height="1" fill="#eef8fc"/><rect x="8" y="7" width="1" height="1" fill="#9aa0a8"/><rect x="9" y="7" width="1" height="1" fill="#eef8fc"/><rect x="10" y="7" width="3" height="1" fill="#e05a4a"/><rect x="13" y="7" width="1" height="1" fill="#eef8fc"/><rect x="14" y="7" width="1" height="1" fill="#9aa0a8"/><rect x="0" y="8" width="1" height="1" fill="#8a6c2c"/><rect x="1" y="8" width="3" height="1" fill="#eef8fc"/><rect x="4" y="8" width="1" height="1" fill="#d0b468"/><rect x="5" y="8" width="3" height="1" fill="#eef8fc"/><rect x="8" y="8" width="1" height="1" fill="#9aa0a8"/><rect x="9" y="8" width="1" height="1" fill="#eef8fc"/><rect x="10" y="8" width="3" height="1" fill="#e05a4a"/><rect x="13" y="8" width="1" height="1" fill="#eef8fc"/><rect x="14" y="8" width="1" height="1" fill="#9aa0a8"/><rect x="0" y="9" width="1" height="1" fill="#8a6c2c"/><rect x="1" y="9" width="7" height="1" fill="#d0b468"/><rect x="8" y="9" width="1" height="1" fill="#9aa0a8"/><rect x="9" y="9" width="5" height="1" fill="#eef8fc"/><rect x="14" y="9" width="1" height="1" fill="#9aa0a8"/><rect x="0" y="10" width="1" height="1" fill="#8a6c2c"/><rect x="1" y="10" width="3" height="1" fill="#eef8fc"/><rect x="4" y="10" width="1" height="1" fill="#d0b468"/><rect x="5" y="10" width="3" height="1" fill="#eef8fc"/><rect x="8" y="10" width="1" height="1" fill="#9aa0a8"/><rect x="9" y="10" width="2" height="1" fill="#eef8fc"/><rect x="11" y="10" width="1" height="1" fill="#2a6ad0"/><rect x="12" y="10" width="2" height="1" fill="#eef8fc"/><rect x="14" y="10" width="1" height="1" fill="#9aa0a8"/><rect x="0" y="11" width="1" height="1" fill="#8a6c2c"/><rect x="1" y="11" width="3" height="1" fill="#eef8fc"/><rect x="4" y="11" width="1" height="1" fill="#d0b468"/><rect x="5" y="11" width="3" height="1" fill="#eef8fc"/><rect x="8" y="11" width="1" height="1" fill="#9aa0a8"/><rect x="9" y="11" width="1" height="1" fill="#eef8fc"/><rect x="10" y="11" width="3" height="1" fill="#2a6ad0"/><rect x="13" y="11" width="1" height="1" fill="#eef8fc"/><rect x="14" y="11" width="1" height="1" fill="#9aa0a8"/><rect x="0" y="12" width="8" height="1" fill="#8a6c2c"/><rect x="8" y="12" width="1" height="1" fill="#9aa0a8"/><rect x="9" y="12" width="1" height="1" fill="#eef8fc"/><rect x="10" y="12" width="3" height="1" fill="#2a6ad0"/><rect x="13" y="12" width="1" height="1" fill="#eef8fc"/><rect x="14" y="12" width="1" height="1" fill="#9aa0a8"/><rect x="8" y="13" width="1" height="1" fill="#9aa0a8"/><rect x="9" y="13" width="5" height="1" fill="#eef8fc"/><rect x="14" y="13" width="1" height="1" fill="#9aa0a8"/><rect x="8" y="14" width="7" height="1" fill="#9aa0a8"/></svg>
<div class="t " style="left:980px;top:147px;font-size:13px;transform:scaleX(0.93);">EMP<i class="us">_</i>ID – VARCHAR2(10)</div>
<svg style="left:961px;top:163px" width="15" height="15" shape-rendering="crispEdges"><rect x="8" y="0" width="7" height="1" fill="#9aa0a8"/><rect x="0" y="1" width="8" height="1" fill="#b8641c"/><rect x="8" y="1" width="1" height="1" fill="#9aa0a8"/><rect x="9" y="1" width="5" height="1" fill="#eef8fc"/><rect x="14" y="1" width="1" height="1" fill="#9aa0a8"/><rect x="0" y="2" width="1" height="1" fill="#b8641c"/><rect x="1" y="2" width="7" height="1" fill="#f6b424"/><rect x="8" y="2" width="1" height="1" fill="#9aa0a8"/><rect x="9" y="2" width="2" height="1" fill="#eef8fc"/><rect x="11" y="2" width="1" height="1" fill="#2a6ad0"/><rect x="12" y="2" width="2" height="1" fill="#eef8fc"/><rect x="14" y="2" width="1" height="1" fill="#9aa0a8"/><rect x="0" y="3" width="1" height="1" fill="#b8641c"/><rect x="1" y="3" width="7" height="1" fill="#c87a20"/><rect x="8" y="3" width="1" height="1" fill="#9aa0a8"/><rect x="9" y="3" width="1" height="1" fill="#eef8fc"/><rect x="10" y="3" width="3" height="1" fill="#2a6ad0"/><rect x="13" y="3" width="1" height="1" fill="#eef8fc"/><rect x="14" y="3" width="1" height="1" fill="#9aa0a8"/><rect x="0" y="4" width="1" height="1" fill="#8a6c2c"/><rect x="1" y="4" width="3" height="1" fill="#dcf6fc"/><rect x="4" y="4" width="1" height="1" fill="#d0b468"/><rect x="5" y="4" width="3" height="1" fill="#dcf6fc"/><rect x="8" y="4" width="1" height="1" fill="#9aa0a8"/><rect x="9" y="4" width="1" height="1" fill="#eef8fc"/><rect x="10" y="4" width="3" height="1" fill="#2a6ad0"/><rect x="13" y="4" width="1" height="1" fill="#eef8fc"/><rect x="14" y="4" width="1" height="1" fill="#9aa0a8"/><rect x="0" y="5" width="1" height="1" fill="#8a6c2c"/><rect x="1" y="5" width="3" height="1" fill="#dcf6fc"/><rect x="4" y="5" width="1" height="1" fill="#d0b468"/><rect x="5" y="5" width="3" height="1" fill="#dcf6fc"/><rect x="8" y="5" width="1" height="1" fill="#9aa0a8"/><rect x="9" y="5" width="5" height="1" fill="#eef8fc"/><rect x="14" y="5" width="1" height="1" fill="#9aa0a8"/><rect x="0" y="6" width="1" height="1" fill="#8a6c2c"/><rect x="1" y="6" width="7" height="1" fill="#d0b468"/><rect x="8" y="6" width="1" height="1" fill="#9aa0a8"/><rect x="9" y="6" width="1" height="1" fill="#eef8fc"/><rect x="10" y="6" width="3" height="1" fill="#e05a4a"/><rect x="13" y="6" width="1" height="1" fill="#eef8fc"/><rect x="14" y="6" width="1" height="1" fill="#9aa0a8"/><rect x="0" y="7" width="1" height="1" fill="#8a6c2c"/><rect x="1" y="7" width="3" height="1" fill="#eef8fc"/><rect x="4" y="7" width="1" height="1" fill="#d0b468"/><rect x="5" y="7" width="3" height="1" fill="#eef8fc"/><rect x="8" y="7" width="1" height="1" fill="#9aa0a8"/><rect x="9" y="7" width="1" height="1" fill="#eef8fc"/><rect x="10" y="7" width="3" height="1" fill="#e05a4a"/><rect x="13" y="7" width="1" height="1" fill="#eef8fc"/><rect x="14" y="7" width="1" height="1" fill="#9aa0a8"/><rect x="0" y="8" width="1" height="1" fill="#8a6c2c"/><rect x="1" y="8" width="3" height="1" fill="#eef8fc"/><rect x="4" y="8" width="1" height="1" fill="#d0b468"/><rect x="5" y="8" width="3" height="1" fill="#eef8fc"/><rect x="8" y="8" width="1" height="1" fill="#9aa0a8"/><rect x="9" y="8" width="1" height="1" fill="#eef8fc"/><rect x="10" y="8" width="3" height="1" fill="#e05a4a"/><rect x="13" y="8" width="1" height="1" fill="#eef8fc"/><rect x="14" y="8" width="1" height="1" fill="#9aa0a8"/><rect x="0" y="9" width="1" height="1" fill="#8a6c2c"/><rect x="1" y="9" width="7" height="1" fill="#d0b468"/><rect x="8" y="9" width="1" height="1" fill="#9aa0a8"/><rect x="9" y="9" width="5" height="1" fill="#eef8fc"/><rect x="14" y="9" width="1" height="1" fill="#9aa0a8"/><rect x="0" y="10" width="1" height="1" fill="#8a6c2c"/><rect x="1" y="10" width="3" height="1" fill="#eef8fc"/><rect x="4" y="10" width="1" height="1" fill="#d0b468"/><rect x="5" y="10" width="3" height="1" fill="#eef8fc"/><rect x="8" y="10" width="1" height="1" fill="#9aa0a8"/><rect x="9" y="10" width="2" height="1" fill="#eef8fc"/><rect x="11" y="10" width="1" height="1" fill="#2a6ad0"/><rect x="12" y="10" width="2" height="1" fill="#eef8fc"/><rect x="14" y="10" width="1" height="1" fill="#9aa0a8"/><rect x="0" y="11" width="1" height="1" fill="#8a6c2c"/><rect x="1" y="11" width="3" height="1" fill="#eef8fc"/><rect x="4" y="11" width="1" height="1" fill="#d0b468"/><rect x="5" y="11" width="3" height="1" fill="#eef8fc"/><rect x="8" y="11" width="1" height="1" fill="#9aa0a8"/><rect x="9" y="11" width="1" height="1" fill="#eef8fc"/><rect x="10" y="11" width="3" height="1" fill="#2a6ad0"/><rect x="13" y="11" width="1" height="1" fill="#eef8fc"/><rect x="14" y="11" width="1" height="1" fill="#9aa0a8"/><rect x="0" y="12" width="8" height="1" fill="#8a6c2c"/><rect x="8" y="12" width="1" height="1" fill="#9aa0a8"/><rect x="9" y="12" width="1" height="1" fill="#eef8fc"/><rect x="10" y="12" width="3" height="1" fill="#2a6ad0"/><rect x="13" y="12" width="1" height="1" fill="#eef8fc"/><rect x="14" y="12" width="1" height="1" fill="#9aa0a8"/><rect x="8" y="13" width="1" height="1" fill="#9aa0a8"/><rect x="9" y="13" width="5" height="1" fill="#eef8fc"/><rect x="14" y="13" width="1" height="1" fill="#9aa0a8"/><rect x="8" y="14" width="7" height="1" fill="#9aa0a8"/></svg>
<div class="t " style="left:980px;top:164px;font-size:13px;transform:scaleX(0.93);">YYYYMMDD – VARCHAR2(8)</div>
<div class="a" style="left:919px;top:291px;width:240px;height:1px;background:#f2efe2;"></div>
<div class="a" style="left:919px;top:292px;width:240px;height:16px;background:#fbfbf8;"></div>
<div class="a" style="left:920px;top:292px;width:15px;height:16px;background:#a9bff2;border-radius:3px"></div>
<div class="a" style="left:920px;top:292px;width:15px;height:15px;background:#fff;border-radius:3px"></div>
<div class="a" style="left:921px;top:293px;width:13px;height:13px;background:#c4d4fa;border-radius:2px"></div>
<div class="a" style="left:937px;top:292px;width:201px;height:16px;background:#a9bff2;border-radius:3px"></div>
<div class="a" style="left:937px;top:292px;width:201px;height:15px;background:#fff;border-radius:3px"></div>
<div class="a" style="left:938px;top:293px;width:199px;height:13px;background:#c4d4fa;border-radius:2px"></div>
<div class="a" style="left:1142px;top:292px;width:16px;height:16px;background:#a9bff2;border-radius:3px"></div>
<div class="a" style="left:1142px;top:292px;width:16px;height:15px;background:#fff;border-radius:3px"></div>
<div class="a" style="left:1143px;top:293px;width:14px;height:13px;background:#c4d4fa;border-radius:2px"></div>
<svg style="left:924px;top:296px" width="8" height="9" viewBox="0 0 8 9"><path d="M5.5 1 L2 4.5 L5.5 8" fill="none" stroke="#4d6185" stroke-width="2.2"/></svg>
<svg style="left:1147px;top:295px" width="8" height="10" viewBox="0 0 8 10"><path d="M2 1 L5.8 4.8 L2 8.6" fill="none" stroke="#3d4f73" stroke-width="2.4"/></svg>
<svg style="left:1033px;top:297px" width="8" height="7" viewBox="0 0 8 7"><path d="M0.5 0 V7 M2.5 0 V7 M4.5 0 V7 M6.5 0 V7" stroke="#eef3fe"/><path d="M1.5 0 V7 M3.5 0 V7 M5.5 0 V7 M7.5 0 V7" stroke="#8fa8dc"/></svg>
<div class="a" style="left:919px;top:311px;width:240px;height:230px;background:#fefefe;border:1px solid #7f9db9"></div>
<div class="a" style="left:921px;top:471px;width:236px;height:68px;background:#ece9d8;"></div>
</body></html>
